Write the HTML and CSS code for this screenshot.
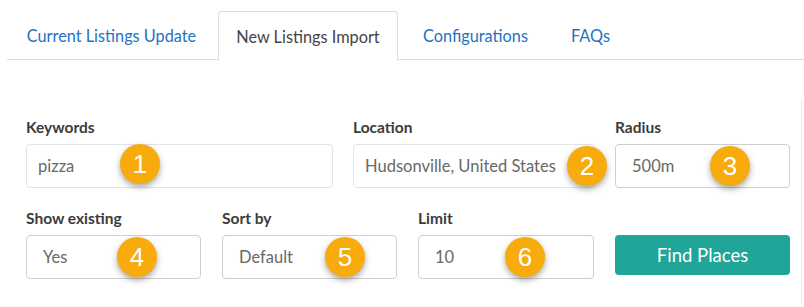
FILE: index.html
```html
<!DOCTYPE html>
<html lang="en">
<head>
  <meta charset="UTF-8" />
  <title>New Listings Import</title>
  <link rel="stylesheet" href="styles.css">
</head>
<body>
  <ul class="tabs">
    <li class="tab tab-current"><a href="#">Current Listings Update</a></li>
    <li class="tab tab-new active"><a href="#">New Listings Import</a></li>
    <li class="tab tab-config"><a href="#">Configurations</a></li>
    <li class="tab tab-faq"><a href="#">FAQs</a></li>
  </ul>

  <div class="panel">
    <div class="row row-top">
      <div class="field">
        <label>Keywords</label>
        <div class="control">
          <input class="input" type="text" value="pizza" />
          <span class="badge b1">1</span>
        </div>
      </div>
      <div class="field">
        <label>Location</label>
        <div class="control">
          <input class="input" type="text" value="Hudsonville, United States" />
          <span class="badge b2">2</span>
        </div>
      </div>
      <div class="field">
        <label>Radius</label>
        <div class="control">
          <div class="select">500m</div>
          <span class="badge b3">3</span>
        </div>
      </div>
    </div>

    <div class="row row-bottom">
      <div class="field">
        <label>Show existing</label>
        <div class="control">
          <div class="select">Yes</div>
          <span class="badge b4">4</span>
        </div>
      </div>
      <div class="field">
        <label>Sort by</label>
        <div class="control">
          <div class="select">Default</div>
          <span class="badge b5">5</span>
        </div>
      </div>
      <div class="field">
        <label>Limit</label>
        <div class="control">
          <div class="select">10</div>
          <span class="badge b6">6</span>
        </div>
      </div>
      <div class="field field-action">
        <button class="btn">Find Places</button>
      </div>
    </div>
  </div>
</body>
</html>
```

FILE: styles.css
```css
body { margin: 0; font-family: Lato, "Open Sans", sans-serif; color: #444; background: #fff; }

.tabs { list-style: none; margin: 11px 0 0 7px; padding: 0; display: flex; border-bottom: 1px solid #dedede; height: 48px; }
.tab { display: flex; align-items: center; justify-content: center; margin-right: 2px; border: 1px solid transparent; border-bottom: none; border-radius: 4px 4px 0 0; }
.tab a { color: #2473c2; text-decoration: none; font-size: 16.3px; }
.tab-current { width: 207px; }
.tab-new { width: 178px; }
.tab-config { width: 149px; }
.tab-faq { width: 73px; }
.tab.active { background: #fff; border-color: #dedede; margin-bottom: -1px; height: 49px; }
.tab.active a { color: #454545; }

.panel { margin-top: 38px; width: 775px; padding: 19px 0 30px 26px; border-right: 1px solid #ececec; }

.row { display: grid; column-gap: 20px; }
.row-top { grid-template-columns: 307px 242px 175px; }
.row-bottom { grid-template-columns: 175px 175px 176px 175px; column-gap: 21px; margin-top: 20px; align-items: end; }

.field label { display: block; font-size: 15.5px; font-weight: bold; line-height: 20px; color: #3b3b3b; margin-bottom: 7px; }
.control { position: relative; }

.input, .select { box-sizing: border-box; width: 100%; height: 44px; font-family: inherit; font-size: 16.5px; color: #686868; border-radius: 4px; background: #fff; }
.input { border: 1px solid #e4e4e4; padding: 0 11px; outline: none; }
.select { border: 1px solid #cfcfcf; padding: 0 16px; display: flex; align-items: center; }

.field-action { align-self: start; padding-top: 27px; }
.btn { width: 100%; height: 40px; border: none; border-radius: 4px; background: #20a698; color: #fff; font-family: inherit; font-size: 18.5px; cursor: pointer; }

.badge { position: absolute; top: 50%; width: 40px; height: 40px; margin-top: -20px; border-radius: 50%; background: #f7ab0c; color: #fff; font-family: "Liberation Sans", Arial, sans-serif; font-size: 26px; line-height: 40px; text-align: center; box-shadow: 0 3px 6px rgba(0, 0, 0, 0.35); }
.b1 { left: 94px; margin-top: -22px; }
.b2 { left: 214px; }
.b3 { left: 95px; }
.b4 { left: 91px; }
.b5 { left: 103px; }
.b6 { left: 87px; }
```
